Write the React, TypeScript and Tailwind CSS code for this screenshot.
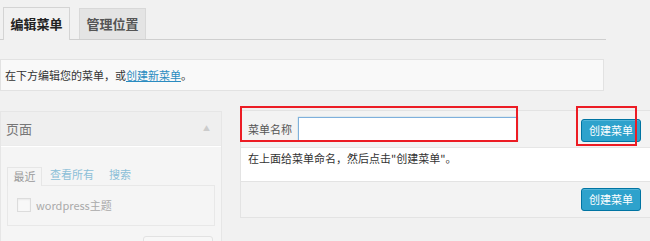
import React from "react";

const font = { fontFamily: '"Noto Sans CJK SC", "Noto Sans", sans-serif' };

function BlueButton() {
  return (
    <button className="h-[23px] w-[60px] rounded-[3px] border border-[#0074a2] bg-[#2ea2cc] text-[11px] leading-none text-white shadow-[inset_0_1px_0_rgba(120,200,230,0.5)]">
      创建菜单
    </button>
  );
}

export default function App() {
  return (
    <div className="h-[241px] w-[650px] overflow-hidden bg-[#f1f1f1] text-[#333]" style={font}>
      {/* tabs */}
      <div className="flex h-[40px] w-[606px] items-end border-b border-[#cfcfcf] pl-[3px]">
        <div className="-mb-px flex h-[33px] w-[67px] items-center justify-center border border-b-0 border-[#d4d4d4] bg-[#f1f1f1] text-[13px] font-bold text-[#222]">
          编辑菜单
        </div>
        <div className="ml-[9px] flex h-[31px] w-[67px] items-center justify-center border border-b-0 border-[#d8d8d8] bg-[#e4e4e4] text-[13px] font-semibold text-[#555]">
          管理位置
        </div>
      </div>

      {/* notice */}
      <div className="mt-[19px] flex h-[32px] w-[604px] items-center border border-[#e2e2e2] bg-[#f9f9f9] pl-[4px] text-[11px] text-[#333]">
        在下方编辑您的菜单，或
        <span className="text-[#2a8bc0] underline">创建新菜单</span>。
      </div>

      {/* columns */}
      <div className="mt-[19px] flex items-start">
        {/* left: disabled meta box */}
        <div className="mt-px w-[222px] shrink-0">
          <div className="border border-[#e6e6e6] bg-[#f5f5f5]">
            <div className="flex h-[34px] items-center justify-between border-b border-[#ececec] bg-[#efefef] pl-[5px] pr-[11px]">
              <span className="text-[13px] text-[#777]">页面</span>
              <span className="text-[7px] text-[#ccc]">▲</span>
            </div>
            <div className="border-t border-white px-[6px] pt-[19px] pb-[14px]">
              <div className="flex items-end text-[11px]">
                <div className="-mb-px flex h-[19px] w-[35px] items-center justify-center border border-b-0 border-[#e6e6e6] bg-[#f5f5f5] text-[#999]">
                  最近
                </div>
                <span className="ml-[8px] pb-[2px] text-[#8cbfd8]">查看所有</span>
                <span className="ml-[15px] pb-[2px] text-[#8cbfd8]">搜索</span>
              </div>
              <div className="flex h-[41px] items-center border border-[#e8e8e8] bg-[#f5f5f5] pl-[9px]">
                <div className="h-[14px] w-[14px] border border-[#dcdcdc] bg-[#f8f8f8] shadow-[inset_0_1px_2px_rgba(0,0,0,0.06)]" />
                <span className="ml-[5px] text-[11px] text-[#aaa]">wordpress主题</span>
              </div>
              <div className="mt-[10px] ml-[136px] h-[20px] w-[70px] rounded-[3px] border border-[#e2e2e2] bg-[#f7f7f7]" />
            </div>
          </div>
        </div>

        {/* right: create menu */}
        <div className="relative ml-[18px] w-[412px] shrink-0 border border-[#e3e3e3] bg-[#f3f3f3]">
          <div className="flex h-[37px] items-center border-b border-[#e6e6e6] pl-[7px] pr-[10px]">
            <span className="text-[11px] text-[#555]">菜单名称</span>
            <div className="ml-[6px] h-[24px] w-[220px] border border-[#7fb0dc] bg-white shadow-[0_0_1px_rgba(30,140,190,0.5)]" />
            <div className="ml-auto">
              <BlueButton />
            </div>
          </div>
          <div className="h-[33px] bg-white pl-[7px] pt-[2px] text-[11px] text-[#333]">
            在上面给菜单命名，然后点击"创建菜单"。
          </div>
          <div className="flex h-[36px] items-center justify-end border-t border-[#e3e3e3] pr-[10px]">
            <BlueButton />
          </div>

          {/* highlight boxes */}
          <div className="absolute -top-[5px] -left-px h-[36px] w-[278px] border-2 border-[#ec1c24]" />
          <div className="absolute -top-[5px] left-[335px] h-[40px] w-[61px] border-2 border-[#ec1c24]" />
        </div>
      </div>
    </div>
  );
}
